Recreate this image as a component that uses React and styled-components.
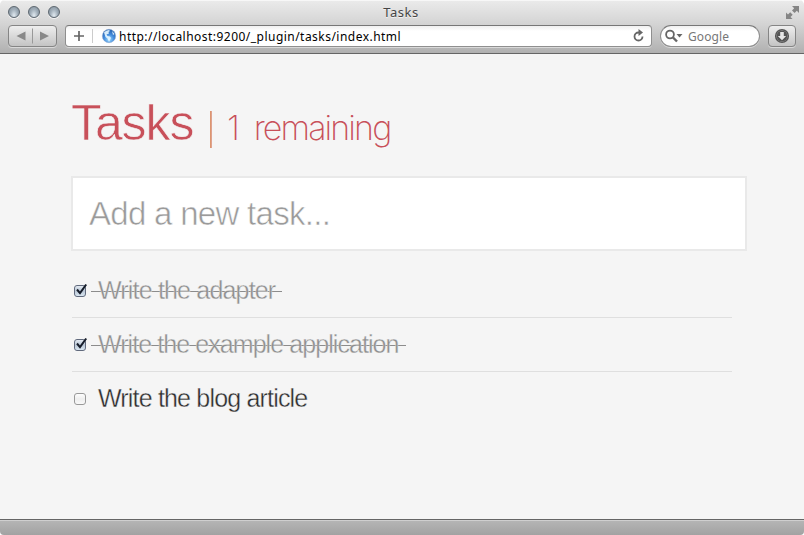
import React from "react";
import styled, { createGlobalStyle } from "styled-components";

const GlobalStyle = createGlobalStyle`
  * { box-sizing: border-box; }
  html, body { margin: 0; padding: 0; background: #fff; }
  body { overflow: hidden; }
`;

const Window = styled.div`
  width: 804px;
  height: 535px;
  display: flex;
  flex-direction: column;
  overflow: hidden;
  border-radius: 5px 5px 4px 4px;
  background: #f5f5f5;
  font-family: "Liberation Sans", Arial, sans-serif;
`;

const Chrome = styled.header`
  height: 54px;
  flex: none;
  background: linear-gradient(#ebebeb, #d4d4d4 45%, #b0b0b0);
  border-bottom: 1px solid #656565;
  box-shadow: inset 0 1px 0 #f7f7f7;
`;

const TitleBar = styled.div`
  height: 25px;
  display: grid;
  grid-template-columns: 100px 1fr 100px;
  align-items: center;
`;

const Lights = styled.div`
  display: flex;
  gap: 8px;
  padding: 0 0 1px 8px;
`;

const Light = styled.span`
  width: 12px;
  height: 12px;
  border-radius: 50%;
  border: 1px solid #5d6770;
  background: radial-gradient(ellipse at 50% 85%, #dce5ec 5%, #a3b0bb 50%, #8996a1 85%);
  box-shadow: 0 1px 0 #f3f3f3;
`;

const Title = styled.div`
  text-align: center;
  font: 13px/18px "Noto Sans", sans-serif;
  letter-spacing: 0.5px;
  color: #454545;
  padding: 0 2px 1px 0;
  text-shadow: 0 1px 0 #f2f2f2;
`;

const Expand = styled.svg`
  justify-self: end;
  margin-right: 4px;
  width: 15px;
  height: 15px;
`;

const Toolbar = styled.div`
  display: flex;
  gap: 8px;
  padding: 0 8px;
  height: 22px;
`;

const Button = styled.div`
  width: ${(p) => p.$width}px;
  height: 22px;
  flex: none;
  display: flex;
  align-items: center;
  justify-content: center;
  border: 1px solid #858585;
  border-radius: 4px;
  background: linear-gradient(#eee, #c4c4c4);
  box-shadow: 0 1px 0 #d9d9d9;
`;

const Field = styled.div`
  height: 22px;
  width: ${(p) => p.$width}px;
  flex: none;
  display: flex;
  align-items: center;
  border: 1px solid #8f8f8f;
  border-top-color: #777;
  border-radius: ${(p) => (p.$round ? 11 : 4)}px;
  background: linear-gradient(#f0f0f0, #fff 25%);
  box-shadow: 0 1px 0 #d9d9d9;
`;

const FieldIcon = styled.svg`
  flex: none;
  margin-left: ${(p) => p.$left || 0}px;
  margin-right: ${(p) => p.$right || 0}px;
`;

const Url = styled.span`
  flex: 1;
  margin-left: 1px;
  padding-top: 1px;
  white-space: nowrap;
  font: 12px/18px "Noto Sans", sans-serif;
  letter-spacing: 0.47px;
  color: #000;
`;

const SearchHint = styled(Url)`
  margin-left: 5px;
  letter-spacing: 0.1px;
  color: #777;
`;

const Page = styled.main`
  flex: 1;
  padding: 39px 57px 0 71px;
  overflow: hidden;
`;

const Heading = styled.h1`
  height: 83px;
  margin: 0;
  display: flex;
  align-items: baseline;
  color: #c8505a;
  font-weight: 400;
  line-height: 60px;
  white-space: nowrap;
`;

const HeadingName = styled.span`
  width: 139px;
  font-size: 50px;
  letter-spacing: -1.1px;
  -webkit-text-stroke: 0.6px #f5f5f5;
`;

const Divider = styled.span`
  width: 2px;
  height: 37px;
  align-self: flex-start;
  margin-top: 18px;
  background: linear-gradient(90deg, #dc9060, #dfa9a0);
`;

const Remaining = styled.span`
  margin-left: 15px;
  font-family: Inter, sans-serif;
  font-weight: 200;
  font-size: 34px;
  letter-spacing: -1.9px;
  word-spacing: 8px;
`;

const TaskInput = styled.input`
  display: block;
  width: 676px;
  height: 75px;
  margin: 0;
  padding: 0 16px;
  border: 2px solid #e9e9e9;
  border-radius: 0;
  outline: none;
  background: #fff;
  font: 33px "Liberation Sans", Arial, sans-serif;
  letter-spacing: -0.7px;
  -webkit-text-stroke: 0.55px #fff;
  &::placeholder { color: #9a9a9a; opacity: 1; }
`;

const TaskList = styled.ul`
  list-style: none;
  width: 660px;
  margin: 13px 0 0 1px;
  padding: 0;
`;

const TaskRow = styled.li`
  height: 54px;
  display: flex;
  align-items: center;
  padding-bottom: 2px;
  border-bottom: 1px solid #dfdfdf;
  &:last-child { border-bottom-color: transparent; }
`;

const Check = styled.svg`
  flex: none;
  width: 17px;
  height: 16px;
`;

const TaskText = styled.span`
  margin-left: 2px;
  padding: 0 7px;
  font-size: 25px;
  line-height: 30px;
  letter-spacing: ${(p) => p.$spacing}px;
  white-space: nowrap;
  color: ${(p) => (p.$done ? "#8e8e8e" : "#2c2c2c")};
  -webkit-text-stroke: 0.35px #f5f5f5;
  background: ${(p) => (p.$done ? "linear-gradient(#8c8c8c, #8c8c8c) 0 16px / 100% 1px no-repeat" : "none")};
`;

const StatusBar = styled.footer`
  height: 16px;
  flex: none;
  border-top: 1px solid #656565;
  background: linear-gradient(#b6b6b6, #a2a2a2);
  box-shadow: inset 0 1px 0 #cfcfcf;
`;

const tasks = [
  { text: "Write the adapter", done: true, spacing: -0.82 },
  { text: "Write the example application", done: true, spacing: -0.93 },
  { text: "Write the blog article", done: false, spacing: -0.82 },
];

function Checkbox({ done }) {
  return (
    <Check viewBox="0 0 17 16">
      <defs>
        <linearGradient id="on" x2="0" y2="1"><stop stopColor="#e8eef5" /><stop offset=".5" stopColor="#b9c6d5" /><stop offset="1" stopColor="#dce9f4" /></linearGradient>
        <linearGradient id="off" x2="0" y2="1"><stop stopColor="#fff" /><stop offset=".5" stopColor="#eee" /><stop offset="1" stopColor="#fafafa" /></linearGradient>
      </defs>
      <rect x="2.500" y="3.500" width="11" height="11" rx="2.500" fill={done ? "url(#on)" : "url(#off)"} stroke={done ? "#616a7d" : "#999"} />
      {done && <path d="M5 7.500 8 11.200 14.200 2.500" fill="none" stroke="#151c29" strokeWidth="2" />}
    </Check>
  );
}

export default function App() {
  return (
    <>
      <GlobalStyle />
      <Window>
        <Chrome>
          <TitleBar>
            <Lights><Light /><Light /><Light /></Lights>
            <Title>Tasks</Title>
            <Expand viewBox="0 0 15 15" fill="#858585">
              <path d="M7 1h7v7l-2.200-2.200-2.200 2.200L7 5.400l2.200-2.200zM1 7.500l2 2L5.200 7.300l2.500 2.500-2.200 2.200 2 2H1z" />
            </Expand>
          </TitleBar>
          <Toolbar>
            <Button $width={49}>
              <svg width="47" height="20" viewBox="0 0 47 20">
                <path d="M16.500 5.500v9L7.500 10zM31 5.500v9L40 10z" fill="#888" />
                <path d="M23.500 2.500v15" stroke="#999" />
              </svg>
            </Button>
            <Field $width={587}>
              <FieldIcon width="52" height="20" viewBox="0 0 52 20">
                <defs>
                  <radialGradient id="globe" cx=".5" cy=".75" r=".75"><stop stopColor="#9fdcff" /><stop offset=".5" stopColor="#438bdc" /><stop offset="1" stopColor="#235fac" /></radialGradient>
                </defs>
                <path d="M13 5v10M8 10h10" stroke="#666" strokeWidth="1.700" />
                <path d="M26.500 3v14" stroke="#ccc" />
                <circle cx="43" cy="10" r="6.700" fill="url(#globe)" stroke="#8ca9cf" strokeWidth=".5" />
                <path d="M38 6.500q2-2.500 5-2.500l1 1-1.500 1 .5 1.500-2.500 1 1 1.500 2.500.5 1 1.500-2 4-1.500-3.500-2-1.500zM46 5l2.500 3-1.500 1z" fill="#e7f7ff" opacity=".9" />
              </FieldIcon>
              <Url>http://localhost:9200/_plugin/tasks/index.html</Url>
              <FieldIcon $right={3} width="18" height="20" viewBox="0 0 18 20">
                <path d="M9.500 6.500H8.500a4 4 0 1 0 4 4" fill="none" stroke="#666" strokeWidth="1.800" />
                <path d="M8.500 3 13 6.500 8.500 10z" fill="#666" />
              </FieldIcon>
            </Field>
            <Field $width={100} $round>
              <FieldIcon $left={3} width="19" height="20" viewBox="0 0 19 20">
                <circle cx="6" cy="8.500" r="3.900" fill="none" stroke="#666" strokeWidth="1.800" />
                <path d="m9 11.500 4 4" stroke="#666" strokeWidth="2.400" />
                <path d="M12.500 8h6l-3 3.500z" fill="#666" />
              </FieldIcon>
              <SearchHint>Google</SearchHint>
            </Field>
            <Button $width={28}>
              <svg width="16" height="16" viewBox="0 0 16 16">
                <circle cx="8" cy="8" r="6.300" fill="#ddd" stroke="#555" strokeWidth="1.600" />
                <circle cx="8" cy="8" r="5.500" fill="#555" />
                <path d="M6.200 4h3.600v4h2.400L8 12.200 3.800 8h2.400z" fill="#e6e6e6" />
              </svg>
            </Button>
          </Toolbar>
        </Chrome>
        <Page>
          <Heading>
            <HeadingName>Tasks</HeadingName>
            <Divider />
            <Remaining>1 remaining</Remaining>
          </Heading>
          <TaskInput placeholder="Add a new task..." />
          <TaskList>
            {tasks.map((t) => (
              <TaskRow key={t.text}>
                <Checkbox done={t.done} />
                <TaskText $done={t.done} $spacing={t.spacing}>{t.text}</TaskText>
              </TaskRow>
            ))}
          </TaskList>
        </Page>
        <StatusBar />
      </Window>
    </>
  );
}
